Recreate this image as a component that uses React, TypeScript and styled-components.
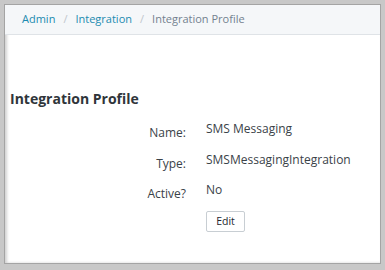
import React from "react";
import styled, { createGlobalStyle } from "styled-components";

const GlobalStyle = createGlobalStyle`
  html, body {
    margin: 0;
    padding: 0;
    background: #c8c8c8;
    font-family: "Open Sans", "Liberation Sans", sans-serif;
  }
`;

const Page = styled.div`
  padding: 4px 4px 0 4px;
  height: 270px;
  box-sizing: border-box;
`;

const Panel = styled.div`
  width: 377px;
  height: 260px;
  box-sizing: border-box;
  background: #fff;
  border: 1px solid #a4a4a4;
  box-shadow: inset 2px 0 3px rgba(0, 0, 0, 0.18);
  display: flex;
  flex-direction: column;
`;

const Breadcrumb = styled.nav`
  height: 30px;
  box-sizing: border-box;
  background: #f5f7f9;
  border-bottom: 1px solid #dfe3e7;
  display: flex;
  align-items: center;
  padding: 0 0 3px 17px;
  font-size: 11px;
`;

const Crumb = styled.span<{ $active?: boolean }>`
  color: ${(p) => (p.$active ? "#73818f" : "#1b8bb0")};
`;

const Sep = styled.span`
  color: #c0c6cc;
  padding: 0 8px;
`;

const Content = styled.div`
  padding: 54px 0 0 5px;
`;

const Heading = styled.h2`
  margin: 0 0 11px 0;
  font-size: 14px;
  font-weight: 700;
  color: #2f353a;
  line-height: 20px;
`;

const Form = styled.div`
  display: grid;
  grid-template-columns: 176px 1fr;
  column-gap: 20px;
  row-gap: 8.5px;
  color: #3a4248;
  font-size: 12px;
`;

const Label = styled.div`
  text-align: right;
  line-height: 18px;
  padding-top: 4px;
`;

const Value = styled.div`
  line-height: 18px;
`;

const Button = styled.button`
  margin-top: -1px;
  font-family: inherit;
  font-size: 10.5px;
  color: #23282c;
  background: #fff;
  border: 1px solid #c8ced3;
  border-radius: 2px;
  width: 39px;
  height: 21px;
  padding: 0;
  justify-self: start;
`;

export default function App() {
  return (
    <Page>
      <GlobalStyle />
      <Panel>
        <Breadcrumb>
          <Crumb>Admin</Crumb>
          <Sep>/</Sep>
          <Crumb>Integration</Crumb>
          <Sep>/</Sep>
          <Crumb $active>Integration Profile</Crumb>
        </Breadcrumb>
        <Content>
          <Heading>Integration Profile</Heading>
          <Form>
            <Label>Name:</Label>
            <Value>SMS Messaging</Value>
            <Label>Type:</Label>
            <Value>SMSMessagingIntegration</Value>
            <Label>Active?</Label>
            <Value>No</Value>
            <div />
            <Button>Edit</Button>
          </Form>
        </Content>
      </Panel>
    </Page>
  );
}
